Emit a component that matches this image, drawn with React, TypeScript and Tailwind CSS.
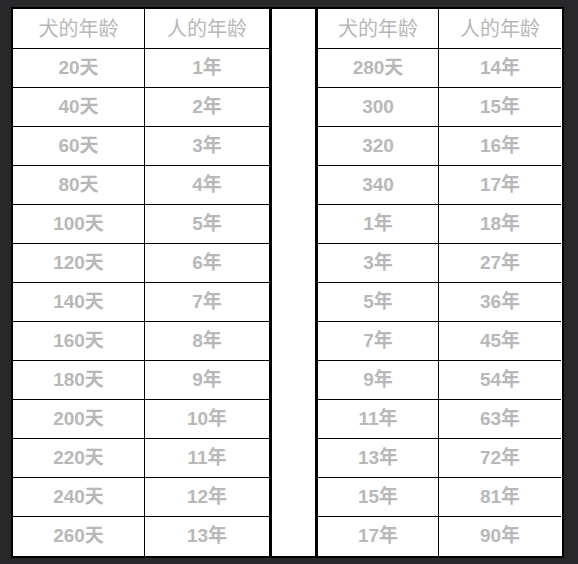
import React from "react";

const left: [string, string][] = [
  ["20天", "1年"],
  ["40天", "2年"],
  ["60天", "3年"],
  ["80天", "4年"],
  ["100天", "5年"],
  ["120天", "6年"],
  ["140天", "7年"],
  ["160天", "8年"],
  ["180天", "9年"],
  ["200天", "10年"],
  ["220天", "11年"],
  ["240天", "12年"],
  ["260天", "13年"],
];

const right: [string, string][] = [
  ["280天", "14年"],
  ["300", "15年"],
  ["320", "16年"],
  ["340", "17年"],
  ["1年", "18年"],
  ["3年", "27年"],
  ["5年", "36年"],
  ["7年", "45年"],
  ["9年", "54年"],
  ["11年", "63年"],
  ["13年", "72年"],
  ["15年", "81年"],
  ["17年", "90年"],
];

const font = { fontFamily: '"Liberation Sans", "Noto Sans CJK SC", sans-serif' };

function AgeTable({
  rows,
  widths,
  className,
}: {
  rows: [string, string][];
  widths: [string, string];
  className: string;
}) {
  const all: [string, string][] = [["犬的年龄", "人的年龄"], ...rows];
  return (
    <div className={"flex flex-col " + className}>
      {all.map(([a, b], i) => {
        const head = i === 0;
        const last = i === all.length - 1;
        const text = head ? "text-[20px] font-normal" : "text-[19px] font-bold";
        return (
          <div
            key={i}
            className={
              "flex " +
              (head ? "h-[40px] " : "h-[39px] ") +
              (last ? "" : "border-b border-black")
            }
          >
            <div
              className={
                "flex items-center justify-center border-r border-black text-[#b8b8b8] " +
                widths[0] +
                " " +
                text
              }
            >
              {a}
            </div>
            <div
              className={
                "flex items-center justify-center text-[#b8b8b8] " +
                widths[1] +
                " " +
                text
              }
            >
              {b}
            </div>
          </div>
        );
      })}
    </div>
  );
}

export default function App() {
  return (
    <div
      className="w-[578px] h-[564px] bg-[#28282b] pt-[7px] pl-[11px]"
      style={font}
    >
      <div className="flex w-[553px] h-[551px] border-2 border-black bg-white">
        <AgeTable
          rows={left}
          widths={["w-[132px]", "w-[124px]"]}
          className="border-r-[3px] border-black"
        />
        <div className="w-[43px]" />
        <AgeTable
          rows={right}
          widths={["w-[121px]", "w-[122px]"]}
          className="border-l-[3px] border-black"
        />
      </div>
    </div>
  );
}
